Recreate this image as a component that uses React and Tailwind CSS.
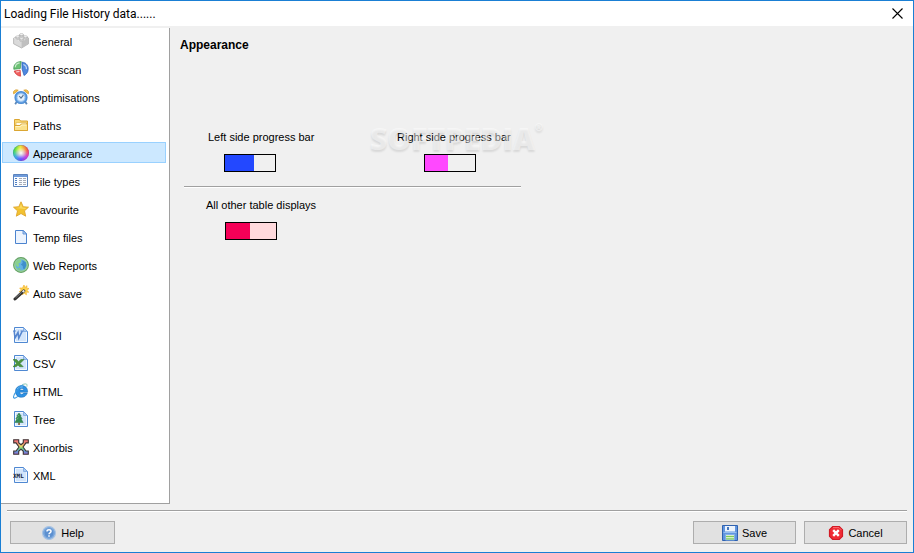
import { useState } from 'react';

const Svg = ({ children }) => (
    <svg width="16" height="16" viewBox="0 0 16 16" className="shrink-0" aria-hidden="true">{children}</svg>
);

// Blue sheet with a folded corner, shared by the export formats
const Sheet = () => (
    <>
        <path d="M1.5.5h9l4 4v11h-13z" fill="#d3e5fb" stroke="#4f88d2" />
        <path d="M2.5 1.5h8v3h3v10h-11z" fill="none" stroke="#f3f9ff" />
        <path d="M10.5.5v4h4z" fill="#a9cbf2" stroke="#6b9bdc" strokeWidth=".7" />
    </>
);

const GeneralIcon = () => (
    <Svg>
        <path d="M.6 5.2 8 2l7.5 3v5.8L8.6 15 .6 10.8z" fill="#dadada" stroke="#a5a5a5" strokeWidth=".7" />
        <path d="M.8 5.3 8 2.3l7.3 2.9-6.8 3.5z" fill="#f1f1f1" />
        <path d="m8.6 8.8 6.8-3.5v5.5L8.6 14.8z" fill="#c0c0c0" />
        <path d="M2.7 3.8v1.6c0 1.3 4 1.3 4 0V3.8M6.5 1.6v1.6c0 1.3 4 1.3 4 0V1.6M6.5 5.8v1.6c0 1.3 4 1.3 4 0V5.8M10.5 3.8v1.5c0 1.3 3.8 1.3 3.8 0V3.8" fill="#d2d2d2" stroke="#a0a0a0" strokeWidth=".5" />
        <g fill="#f6f6f6" stroke="#a0a0a0" strokeWidth=".5">
            <ellipse cx="8.5" cy="1.6" rx="2" ry="1" />
            <ellipse cx="4.7" cy="3.8" rx="2" ry="1" />
            <ellipse cx="12.4" cy="3.7" rx="1.9" ry="1" />
            <ellipse cx="8.5" cy="5.8" rx="2" ry="1" />
        </g>
    </Svg>
);

const PostScanIcon = () => (
    <Svg>
        <path d="M7.3 7.5.8 8.3C.3 3.8 3.3.6 8.2.5z" fill="#6cc274" stroke="#3c9650" strokeWidth=".7" />
        <path d="M9 1.2c4.5.2 6.5 3.8 6.2 7.2-.2 3.3-2.4 5.3-4.2 6.1L9 7.8z" fill="#4f88de" stroke="#2b5fb8" strokeWidth=".7" />
        <path d="M7.2 9.2 1.2 10c.8 2.8 3.4 4.9 6.4 5.2z" fill="#f06060" stroke="#d03434" strokeWidth=".7" />
        <path d="M2.3 6.3c.1-2.4 1.8-4 4.3-4.4M10.4 3.5c2.1.8 3.2 2.6 3 4.6M3.2 10.8l3.3-.4" fill="none" stroke="#fff" strokeOpacity=".65" strokeWidth="1.2" />
    </Svg>
);

const ClockIcon = () => (
    <Svg>
        <path d="m3.8 12.5-1.6 2.8M12.2 12.5l1.6 2.8" stroke="#5b87b8" strokeWidth="1.8" />
        <path d="M.7 4.8C-.2 2 2 .1 5.2 1.3zM15.3 4.8C16.2 2 14 .1 10.8 1.3z" fill="#f4c752" stroke="#d79d2b" strokeWidth=".9" />
        <circle cx="8" cy="8.5" r="5.9" fill="#6ba6e6" stroke="#4f8fd6" strokeWidth="1.4" />
        <circle cx="8" cy="8.5" r="3.9" fill="#e4f1fe" stroke="#9cc6f0" strokeWidth=".8" />
        <path d="M6.2 7 8 9.2 10.4 6.2" fill="none" stroke="#55718d" strokeWidth="1.1" />
    </Svg>
);

const FolderIcon = () => (
    <Svg>
        <path d="M1.5 13.5v-11h5l1 1.5h7v9.5z" fill="#f9d976" stroke="#dba632" />
        <path d="M3 5.5h10.5v3H3z" fill="#fffbea" stroke="#e5bc54" strokeWidth=".8" />
        <path d="M1.5 13.5v-5H7l1.2-1.5h6.3v6.5z" fill="#fbe28c" stroke="#dba632" />
        <path d="M2.5 9.6h5L8.7 8h4.8" fill="none" stroke="#fff6cd" />
    </Svg>
);

const ColorWheelIcon = () => (
    <Svg>
        <defs>
            <radialGradient id="wheel-light">
                <stop offset="0" stopColor="#fff" />
                <stop offset=".2" stopColor="#fff" stopOpacity=".7" />
                <stop offset=".75" stopColor="#fff" stopOpacity="0" />
            </radialGradient>
            <linearGradient id="wheel-top" x2="1">
                <stop offset="0" stopColor="#2fe04a" />
                <stop offset=".45" stopColor="#e8ee3a" />
                <stop offset="1" stopColor="#ff4242" />
            </linearGradient>
            <linearGradient id="wheel-bottom" x2="1">
                <stop offset="0" stopColor="#2ad4e8" />
                <stop offset=".5" stopColor="#6350ff" />
                <stop offset="1" stopColor="#ff35d6" />
            </linearGradient>
            <linearGradient id="wheel-fade" x2="0" y2="1">
                <stop offset=".3" stopColor="#fff" />
                <stop offset=".75" stopColor="#000" />
            </linearGradient>
            <mask id="wheel-mask"><path d="M0 0h16v16H0z" fill="url(#wheel-fade)" /></mask>
        </defs>
        <circle cx="8" cy="8" r="8" fill="url(#wheel-bottom)" />
        <circle cx="8" cy="8" r="8" fill="url(#wheel-top)" mask="url(#wheel-mask)" />
        <circle cx="8" cy="8" r="8" fill="url(#wheel-light)" />
        <circle cx="8" cy="8" r="7.6" fill="none" stroke="#5b4f70" strokeOpacity=".3" strokeWidth=".8" />
    </Svg>
);

const TableIcon = () => (
    <Svg>
        <path d="M.5 1.5h14v12H.5z" fill="#fbfdff" stroke="#5b83bd" />
        <path d="M1 2h13v2H1z" fill="#6f9bdb" />
        <path d="M2 5.5h2M2 7.5h2M2 9.5h2M2 11.5h2" stroke="#507fc4" />
        <path d="M6 5.5h3m1 0h3M6 7.5h3m1 0h3M6 9.5h3m1 0h3M6 11.5h3m1 0h3" stroke="#a8adb8" />
    </Svg>
);

const StarIcon = () => (
    <Svg>
        <path d="m8 .8 2.2 4.9 5.3.5-4 3.6 1.2 5.4L8 12.5l-4.7 2.7 1.2-5.4-4-3.6 5.3-.5z" fill="#f2c230" stroke="#dfa52c" strokeWidth=".9" />
        <path d="M8 2.8 6.6 6.4l-4 .5 9.4 1 1.5-1-4-.5z" fill="#fad95f" />
    </Svg>
);

const PageIcon = () => (
    <Svg>
        <path d="M2.5 1.5h8L13.5 5v9.5h-11z" fill="#edf4fe" stroke="#4b83cf" />
        <path d="M10 1.5V5h3.5z" fill="#bad4f4" stroke="#4b83cf" strokeWidth=".8" />
    </Svg>
);

const GlobeIcon = () => (
    <Svg>
        <circle cx="8" cy="8" r="7.4" fill="#a5d59d" stroke="#65a268" strokeWidth="1.1" />
        <circle cx="8" cy="8" r="5.9" fill="#62b1e4" stroke="#8fcf92" strokeWidth=".8" />
        <path d="M2.8 5.2 6 2.8l2.4.5-.8 2.2-2.2 1 .8 2L5 10.2 2.8 8z" fill="#8bd18a" />
        <path d="m9.3 3.2 3.5 2 .6 3-1.8 4-1.6-.7-.3-2.5-1.8-1.5L9.6 6z" fill="#3f8fcb" />
        <path d="m4.3 11.2 2.2-.4 1.3 2.3-1.5-.2z" fill="#7fca84" />
    </Svg>
);

const WandIcon = () => (
    <Svg>
        <path d="m11 0 .8 2.6L14 .7l-.3 2.5 2.3.3-2 1.8 1.8 2-2.6-.2.2 2.7-2.2-1.7-1.8 1.8-.2-2.8-3-.4 2.1-1.6L6.7 3l2.8.1z" fill="#ffd44d" stroke="#f2b331" strokeWidth=".7" />
        <path d="m2 14 8.8-8.1" stroke="#303030" strokeWidth="3" strokeLinecap="round" />
        <path d="m2.5 12.9 6.2-5.7" stroke="#989898" strokeWidth=".8" />
        <path d="m9.6 7 1.7-1.5" stroke="#e9e9e9" strokeWidth="2" />
    </Svg>
);

const AsciiIcon = () => (
    <Svg>
        <Sheet />
        <path d="m1.2 4 .8 7L5 5.5l.8 5.5L9.3 4" fill="none" stroke="#5585cf" strokeWidth="1.6" />
        <path d="M0 4h3M7.5 4h3" stroke="#5585cf" />
    </Svg>
);

const CsvIcon = () => (
    <Svg>
        <Sheet />
        <path d="M0 4.5h3.5l2 2.2L8 4.5h3L7 8.5l3.2 3.2H6.7L5 10 3 11.7H0l3.5-3.4z" fill="#4b9440" stroke="#3b7d32" strokeWidth=".6" />
    </Svg>
);

const HtmlIcon = () => (
    <Svg>
        <path d="M8.7 2.6c3.7 0 6.2 2.6 5.9 6.6H6.7c.3 2.4 3.1 2.7 4 .9h3.6c-1 2.8-3 4.2-5.8 4.2-3.7 0-6-2.4-6-5.9 0-3.4 2.6-5.8 6.2-5.8zM6.8 7.1h4c-.2-2.3-3.6-2.3-4 0z" fill="#2d91e4" stroke="#1766ad" strokeWidth=".5" />
        <path d="M4.4 6c1.1-1.7 3-2.4 5.2-2.1" fill="none" stroke="#9ed6ff" strokeWidth=".9" />
        <path d="M4.8 13.4C2.9 15 1.2 15.6.7 14.7-.4 12.7 5.2 4.2 10.2 1.4" fill="none" stroke="#3d9ae0" strokeWidth="1.1" />
        <path d="M9.5 1.8c2.4-1.4 5.6-1.6 4.2 2" fill="none" stroke="#a7d5c5" strokeWidth="1.1" />
    </Svg>
);

const TreeIcon = () => (
    <Svg>
        <Sheet />
        <path d="M5.2 11.5h1.7V14H5.2z" fill="#89623b" />
        <path d="M6 2 3.8 5h.8L2.8 7.8H4L1.8 11.5h8.4L8 7.8h1.2L7.4 5h.8z" fill="#348b52" stroke="#2b7746" strokeWidth=".5" />
        <path d="M5.7 4 5 5.3M5.2 6.6 4.2 8.4" stroke="#7cbe81" strokeWidth=".8" />
    </Svg>
);

const XinorbisIcon = () => (
    <Svg>
        <defs>
            <linearGradient id="rainbow" x2="0" y2="1">
                <stop offset="0" stopColor="#ef6674" />
                <stop offset=".25" stopColor="#ed8c74" />
                <stop offset=".45" stopColor="#e9df66" />
                <stop offset=".6" stopColor="#76cf83" />
                <stop offset=".78" stopColor="#5c9cdb" />
                <stop offset="1" stopColor="#9868cf" />
            </linearGradient>
        </defs>
        <path d="M.7.7h5v3l2.3 2 2.3-2v-3h5v3.2H13L10 8l3 4h2.3v3.3h-5v-3L8 10.2l-2.3 2.1v3h-5V12H3l3-4-3-4.1H.7z" fill="url(#rainbow)" stroke="#3c3333" strokeWidth="1.1" />
    </Svg>
);

const XmlIcon = () => (
    <Svg>
        <Sheet />
        <text x="0" y="10.5" fontFamily="DejaVu Sans Mono, monospace" fontSize="6" fontWeight="bold" fill="#172338">XML</text>
    </Svg>
);

const HelpIcon = () => (
    <Svg>
        <circle cx="8" cy="8" r="6.4" fill="#6699d4" stroke="#a7c3e4" strokeWidth="1.2" />
        <circle cx="8" cy="8" r="5" fill="#5c90d0" stroke="#8ab3e2" strokeWidth=".7" />
        <path d="M6 6.5C6 4.3 10 4.3 10 6.5 10 8 8 7.8 8 9.2M8 10.3v1.5" fill="none" stroke="#fff" strokeWidth="1.5" />
    </Svg>
);

const SaveIcon = () => (
    <Svg>
        <path d="M.5.5h15v15H.5z" fill="#6195df" stroke="#2f62b0" />
        <path d="M3 1h10v5.5H3z" fill="#edf4fd" />
        <path d="M5 2h2v3H5z" fill="#4677bd" />
        <path d="M1.5 7.5h13" stroke="#97bff0" />
        <path d="M3.5 9.5h9V15h-9z" fill="#f4fbef" stroke="#83aee7" />
        <path d="M4 11.5h8M4 13.8h8" stroke="#7dcb57" strokeWidth="1.3" />
    </Svg>
);

const CancelIcon = () => (
    <Svg>
        <path d="M4.7 1.5h6.6l3.2 3.2v6.6l-3.2 3.2H4.7l-3.2-3.2V4.7z" fill="#f02c34" stroke="#d21a25" strokeWidth="1.2" />
        <path d="M5 2.6h6l2.3 2.3" fill="none" stroke="#ff7c80" strokeWidth=".8" />
        <path d="m5.2 5.2 5.6 5.6m0-5.6-5.6 5.6" stroke="#fff" strokeWidth="2.4" />
    </Svg>
);

const groups = [
    [
        { label: 'General', Icon: GeneralIcon },
        { label: 'Post scan', Icon: PostScanIcon },
        { label: 'Optimisations', Icon: ClockIcon },
        { label: 'Paths', Icon: FolderIcon },
        { label: 'Appearance', Icon: ColorWheelIcon },
        { label: 'File types', Icon: TableIcon },
        { label: 'Favourite', Icon: StarIcon },
        { label: 'Temp files', Icon: PageIcon },
        { label: 'Web Reports', Icon: GlobeIcon },
        { label: 'Auto save', Icon: WandIcon },
    ],
    [
        { label: 'ASCII', Icon: AsciiIcon },
        { label: 'CSV', Icon: CsvIcon },
        { label: 'HTML', Icon: HtmlIcon },
        { label: 'Tree', Icon: TreeIcon },
        { label: 'Xinorbis', Icon: XinorbisIcon },
        { label: 'XML', Icon: XmlIcon },
    ],
];

const Swatch = ({ label, fill, className }) => (
    <button type="button" aria-label={label} className={`flex h-[18px] w-[52px] border border-black ${className}`}>
        <span className={`h-full ${fill}`} />
    </button>
);

const DialogButton = ({ Icon, children, className }) => (
    <button type="button" className={`flex h-[23px] items-center justify-center gap-1 border border-[#adadad] bg-[#e1e1e1] ${className}`}>
        <Icon />
        <span>{children}</span>
    </button>
);

export default function App() {
    const [active, setActive] = useState('Appearance');

    return (
        <div className="flex min-h-screen flex-col border border-[#1a7fd4] bg-[#f0f0f0] font-['Liberation_Sans',Arial,sans-serif] text-[11px] leading-4 text-black">
            <header className="flex h-[25px] items-center justify-between bg-white pl-[3px] pr-2.5">
                <h1 className="font-[Roboto,sans-serif] text-xs">Loading File History data......</h1>
                <button type="button" aria-label="Close">
                    <svg width="11" height="11" viewBox="0 0 11 11"><path d="m.5.5 10 10m0-10-10 10" stroke="#000" strokeWidth="1.1" /></svg>
                </button>
            </header>

            <div className="flex flex-1 pt-0.5">
                <nav className="flex w-[169px] shrink-0 flex-col gap-[21px] border-b border-r border-[#a0a0a0] bg-white pl-px pr-[3px] pt-0.5">
                    {groups.map((items, i) => (
                        <ul key={i} className="flex flex-col gap-[7px]">
                            {items.map(({ label, Icon }) => (
                                <li key={label}>
                                    <button
                                        type="button"
                                        onClick={() => setActive(label)}
                                        className={`flex h-[21px] w-full items-center gap-1 border pl-2.5 ${active === label ? 'border-[#99d1ff] bg-[#cce8ff]' : 'border-transparent'}`}
                                    >
                                        <Icon />
                                        <span className="pt-0.5">{label}</span>
                                    </button>
                                </li>
                            ))}
                        </ul>
                    ))}
                </nav>

                <main className="flex-1 px-2.5 pt-[9px]">
                    <h2 className="text-xs font-bold">Appearance</h2>
                    <div className="relative ml-1 mt-[76px] w-[337px]">
                        <div className="flex border-b border-[#a0a0a0] pb-3.5 shadow-[0_1px_0_#fff]">
                            <div className="w-[189px] pl-6">
                                <p>Left side progress bar</p>
                                <Swatch label="Left side progress bar" fill="w-[29px] bg-[#2348ff]" className="ml-4 mt-[9px]" />
                            </div>
                            <div className="pl-6">
                                <p>Right side progress bar</p>
                                <Swatch label="Right side progress bar" fill="w-[23px] bg-[#ff48ff]" className="ml-[27px] mt-[9px]" />
                            </div>
                        </div>
                        <div className="pl-[22px] pt-2.5">
                            <p>All other table displays</p>
                            <Swatch label="All other table displays" fill="w-6 bg-[#f50057]" className="ml-[19px] mt-[9px] bg-[#ffdadd]" />
                        </div>
                        <div className="pointer-events-none absolute -top-2 left-[186px] flex font-['Open_Sans',sans-serif] text-[30px] font-extrabold leading-9 text-white/45 [text-shadow:0_2px_2px_rgba(0,0,0,0.1)]">
                            SOFTPEDIA<span className="text-[10px] leading-3">®</span>
                        </div>
                    </div>
                </main>
            </div>

            <footer className="mx-1.5 mt-1.5 flex gap-2 border-t border-[#a0a0a0] pb-2 pl-[3px] pt-2.5 shadow-[inset_0_1px_0_#fff]">
                <DialogButton Icon={HelpIcon} className="mr-auto w-[105px]">Help</DialogButton>
                <DialogButton Icon={SaveIcon} className="w-[103px]">Save</DialogButton>
                <DialogButton Icon={CancelIcon} className="w-[103px]">Cancel</DialogButton>
            </footer>
        </div>
    );
}
